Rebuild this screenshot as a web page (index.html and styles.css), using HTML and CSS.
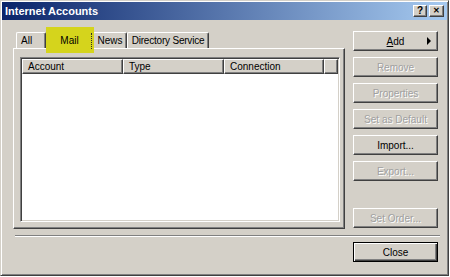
FILE: index.html
```html
<!DOCTYPE html>
<html lang="en">

<head>
    <meta charset="UTF-8">
    <title>Internet Accounts</title>
    <link rel="stylesheet" href="styles.css">
</head>

<body>
<div class="window">
    <div class="titlebar">
        <span class="title">Internet Accounts</span>
        <div class="caption-btns">
            <button class="cap-btn help">?</button>
            <button class="cap-btn close">&#x2715;</button>
        </div>
    </div>
    <div class="content">
        <div class="main">
            <div class="left">
                <div class="tabs">
                    <div class="tab tab-all">All</div>
                    <div class="tab tab-mail selected"><span class="hl"></span><span class="tab-label">Mail</span></div>
                    <div class="tab tab-news">News</div>
                    <div class="tab tab-dir">Directory Service</div>
                </div>
                <div class="panel">
                    <div class="list">
                        <div class="list-head">
                            <div class="col col-account">Account</div>
                            <div class="col col-type">Type</div>
                            <div class="col col-conn">Connection</div>
                            <div class="col col-fill"></div>
                        </div>
                        <div class="list-body"></div>
                    </div>
                </div>
            </div>
            <div class="actions">
                <button class="btn btn-add"><u>A</u>dd</button>
                <button class="btn" disabled>Remove</button>
                <button class="btn" disabled>Properties</button>
                <button class="btn" disabled>Set as Default</button>
                <button class="btn">Import...</button>
                <button class="btn" disabled>Export...</button>
                <button class="btn btn-order" disabled>Set Order...</button>
            </div>
        </div>
        <div class="separator"></div>
        <div class="footer">
            <button class="btn default">Close</button>
        </div>
    </div>
</div>
</body>

</html>
```

FILE: styles.css
```css
body {
    margin: 0;
    background: #fff;
    font-family: "Liberation Sans", Arial, sans-serif;
}

.window {
    width: 449px;
    height: 276px;
    box-sizing: border-box;
    background: #d4d0c8;
    border: 1px solid;
    border-color: #d4d0c8 #404040 #404040 #d4d0c8;
    box-shadow: inset 1px 1px #fff, inset -1px -1px #808080;
    padding: 1px;
}

.titlebar {
    height: 18px;
    display: flex;
    align-items: center;
    justify-content: space-between;
    padding: 0 3px 0 3px;
    background: linear-gradient(90deg, #0a246a, #a6caf0);
}

.title {
    color: #fff;
    font-weight: bold;
    font-size: 11px;
}

.caption-btns {
    display: flex;
    gap: 2px;
}

.cap-btn {
    width: 14px;
    height: 12px;
    padding: 0;
    background: #d4d0c8;
    border: 1px solid;
    border-color: #fff #404040 #404040 #fff;
    box-shadow: inset -1px -1px #808080;
    font-family: "Liberation Sans", Arial, sans-serif;
    font-weight: bold;
    font-size: 10px;
    line-height: 10px;
    color: #000;
}

.cap-btn.close {
    width: 15px;
    font-size: 8px;
}

.content {
    padding: 11px 9px 0 11px;
}

.main {
    display: flex;
    gap: 8px;
}

.left {
    width: 332px;
}

.tabs {
    display: flex;
    height: 16px;
    margin-top: 1px;
    padding-left: 3px;
}

.tab {
    box-sizing: border-box;
    height: 16px;
    padding: 2px 2px 0;
    font-size: 10px;
    white-space: nowrap;
    background: #d4d0c8;
    border: 1px solid;
    border-color: #fff #404040 transparent #fff;
    border-bottom: none;
    border-radius: 2px 2px 0 0;
    box-shadow: inset -1px 0 #808080;
    text-align: center;
}

.tab-all {
    width: 30px;
    text-align: left;
    padding-left: 4px;
}

.tab-mail {
    width: 47px;
}

.tab-news {
    width: 34px;
}

.tab-dir {
    width: 82px;
    letter-spacing: -0.2px;
}

.selected {
    position: relative;
}

.hl {
    position: absolute;
    left: -1px;
    right: -2px;
    top: -6px;
    bottom: -5px;
    background: #d5d41c;
}

.hl::after {
    content: '';
    position: absolute;
    right: 2px;
    top: 6px;
    bottom: 4px;
    border-right: 1px dotted #2a2a30;
}

.tab-label {
    position: relative;
}

.panel {
    height: 181px;
    box-sizing: border-box;
    border: 1px solid;
    border-color: #fff #404040 #404040 #fff;
    box-shadow: inset -1px -1px #808080;
    padding: 8px 4px 6px 6px;
}

.list {
    height: 100%;
    box-sizing: border-box;
    background: #fff;
    border: 1px solid;
    border-color: #808080 #fff #fff #808080;
    box-shadow: inset 1px 1px #404040, inset -1px -1px #d4d0c8;
    padding: 1px;
    display: flex;
    flex-direction: column;
}

.list-head {
    display: flex;
    height: 15px;
}

.col {
    box-sizing: border-box;
    height: 15px;
    padding: 1px 0 0 5px;
    font-size: 10px;
    background: #d4d0c8;
    border: 1px solid;
    border-color: #fff #404040 #404040 #fff;
    box-shadow: inset -1px -1px #808080;
}

.col-account {
    width: 101px;
}

.col-type {
    width: 101px;
}

.col-conn {
    width: 100px;
}

.col-fill {
    flex: 1;
}

.list-body {
    flex: 1;
}

.actions {
    width: 85px;
    display: flex;
    flex-direction: column;
    gap: 6px;
    padding-bottom: 1px;
}

.btn {
    width: 85px;
    height: 20px;
    box-sizing: border-box;
    padding: 0;
    background: #d4d0c8;
    border: 1px solid;
    border-color: #fff #404040 #404040 #fff;
    box-shadow: inset -1px -1px #808080;
    font-family: "Liberation Sans", Arial, sans-serif;
    font-size: 10px;
    color: #000;
}

.btn:disabled {
    color: #a0a0a0;
    text-shadow: 1px 1px #fff;
}

.btn-add {
    position: relative;
}

.btn-add::after {
    content: '';
    position: absolute;
    right: 6px;
    top: 5px;
    border-left: 4px solid #000;
    border-top: 4px solid transparent;
    border-bottom: 4px solid transparent;
}

.btn-order {
    margin-top: auto;
}

.separator {
    margin-top: 6px;
    height: 0;
    border-top: 1px solid #808080;
    border-bottom: 1px solid #fff;
    width: 425px;
    margin-left: 2px;
}

.footer {
    display: flex;
    justify-content: flex-end;
    margin-top: 5px;
}

.btn.default {
    border-color: #000;
    box-shadow: inset 1px 1px #fff, inset -1px -1px #404040, inset -2px -2px #808080;
}
```
